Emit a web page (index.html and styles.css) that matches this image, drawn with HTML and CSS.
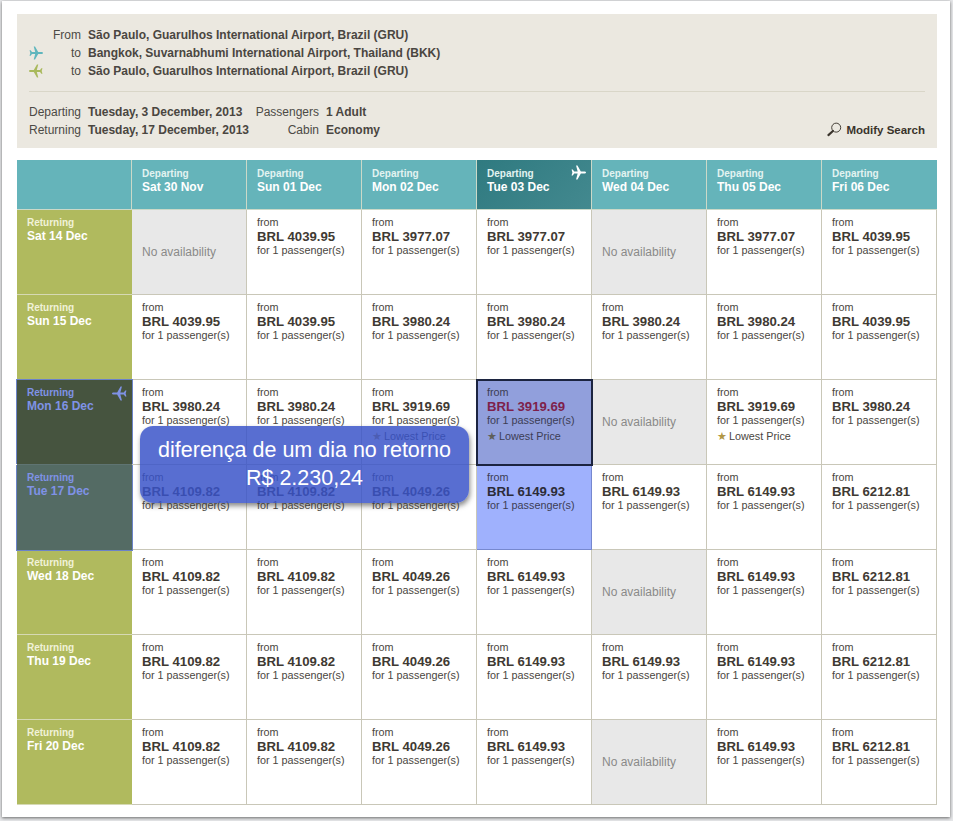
FILE: index.html
```html
<!DOCTYPE html>
<html lang="en">
<head>
<meta charset="utf-8">
<title>Flight search</title>
<link rel="stylesheet" href="styles.css">
</head>
<body>
<svg class="defs" width="0" height="0" aria-hidden="true"><defs>
<symbol id="plane" viewBox="0 0 16 16"><path d="M16 8c0-.8-.9-1.100-1.700-1.100H10.500L6.900.6H5.400L7.100 6.900H3.400L1.900 4.900H.6L1.500 8 .6 11.100H1.900L3.400 9.100H7.100L5.400 15.400H6.900L10.500 9.100H14.300C15.100 9.100 16 8.800 16 8Z"/></symbol>
</defs></svg>
<main class="window">
  <section class="summary">
    <div class="routes">
      <div class="label">From</div><div class="value">São Paulo, Guarulhos International Airport, Brazil (GRU)</div>
      <div class="label"><svg class="route-icon out"><use href="#plane"/></svg>to</div><div class="value">Bangkok, Suvarnabhumi International Airport, Thailand (BKK)</div>
      <div class="label"><svg class="route-icon back"><use href="#plane"/></svg>to</div><div class="value">São Paulo, Guarulhos International Airport, Brazil (GRU)</div>
    </div>
    <div class="details">
      <div class="label">Departing</div><div class="value">Tuesday, 3 December, 2013</div><div class="label">Passengers</div><div class="value">1 Adult</div><div></div>
      <div class="label">Returning</div><div class="value">Tuesday, 17 December, 2013</div><div class="label">Cabin</div><div class="value">Economy</div>
      <a class="modify"><svg class="lens" viewBox="0 0 16 16"><circle cx="9.800" cy="6" r="4.800" fill="none" stroke="#3a342c" stroke-width="1"/><path d="M6.300 9.500 1.500 14" stroke="#3a342c" stroke-width="2.200" stroke-linecap="round"/></svg>Modify Search</a>
    </div>
  </section>

  <section class="grid">
    <div class="corner"></div>
    <div class="dep"><small>Departing</small><b>Sat 30 Nov</b></div>
    <div class="dep"><small>Departing</small><b>Sun 01 Dec</b></div>
    <div class="dep"><small>Departing</small><b>Mon 02 Dec</b></div>
    <div class="dep active"><small>Departing</small><b>Tue 03 Dec</b><svg class="head-icon"><use href="#plane"/></svg></div>
    <div class="dep"><small>Departing</small><b>Wed 04 Dec</b></div>
    <div class="dep"><small>Departing</small><b>Thu 05 Dec</b></div>
    <div class="dep last"><small>Departing</small><b>Fri 06 Dec</b></div>

    <div class="ret"><small>Returning</small><b>Sat 14 Dec</b></div>
    <div class="cell none">No availability</div>
    <div class="cell">from<b>BRL 4039.95</b>for 1 passenger(s)</div>
    <div class="cell">from<b>BRL 3977.07</b>for 1 passenger(s)</div>
    <div class="cell">from<b>BRL 3977.07</b>for 1 passenger(s)</div>
    <div class="cell none">No availability</div>
    <div class="cell">from<b>BRL 3977.07</b>for 1 passenger(s)</div>
    <div class="cell">from<b>BRL 4039.95</b>for 1 passenger(s)</div>

    <div class="ret"><small>Returning</small><b>Sun 15 Dec</b></div>
    <div class="cell">from<b>BRL 4039.95</b>for 1 passenger(s)</div>
    <div class="cell">from<b>BRL 4039.95</b>for 1 passenger(s)</div>
    <div class="cell">from<b>BRL 3980.24</b>for 1 passenger(s)</div>
    <div class="cell">from<b>BRL 3980.24</b>for 1 passenger(s)</div>
    <div class="cell">from<b>BRL 3980.24</b>for 1 passenger(s)</div>
    <div class="cell">from<b>BRL 3980.24</b>for 1 passenger(s)</div>
    <div class="cell">from<b>BRL 4039.95</b>for 1 passenger(s)</div>

    <div class="ret dark"><small>Returning</small><b>Mon 16 Dec</b><svg class="head-icon flip"><use href="#plane"/></svg></div>
    <div class="cell">from<b>BRL 3980.24</b>for 1 passenger(s)</div>
    <div class="cell">from<b>BRL 3980.24</b>for 1 passenger(s)</div>
    <div class="cell">from<b>BRL 3919.69</b>for 1 passenger(s)<span class="low"><i>★</i>Lowest Price</span></div>
    <div class="cell picked">from<b>BRL 3919.69</b>for 1 passenger(s)<span class="low"><i>★</i>Lowest Price</span></div>
    <div class="cell none">No availability</div>
    <div class="cell">from<b>BRL 3919.69</b>for 1 passenger(s)<span class="low"><i>★</i>Lowest Price</span></div>
    <div class="cell">from<b>BRL 3980.24</b>for 1 passenger(s)</div>

    <div class="ret slate"><small>Returning</small><b>Tue 17 Dec</b></div>
    <div class="cell">from<b>BRL 4109.82</b>for 1 passenger(s)</div>
    <div class="cell">from<b>BRL 4109.82</b>for 1 passenger(s)</div>
    <div class="cell">from<b>BRL 4049.26</b>for 1 passenger(s)</div>
    <div class="cell blue">from<b>BRL 6149.93</b>for 1 passenger(s)</div>
    <div class="cell">from<b>BRL 6149.93</b>for 1 passenger(s)</div>
    <div class="cell">from<b>BRL 6149.93</b>for 1 passenger(s)</div>
    <div class="cell">from<b>BRL 6212.81</b>for 1 passenger(s)</div>

    <div class="ret"><small>Returning</small><b>Wed 18 Dec</b></div>
    <div class="cell">from<b>BRL 4109.82</b>for 1 passenger(s)</div>
    <div class="cell">from<b>BRL 4109.82</b>for 1 passenger(s)</div>
    <div class="cell">from<b>BRL 4049.26</b>for 1 passenger(s)</div>
    <div class="cell">from<b>BRL 6149.93</b>for 1 passenger(s)</div>
    <div class="cell none">No availability</div>
    <div class="cell">from<b>BRL 6149.93</b>for 1 passenger(s)</div>
    <div class="cell">from<b>BRL 6212.81</b>for 1 passenger(s)</div>

    <div class="ret"><small>Returning</small><b>Thu 19 Dec</b></div>
    <div class="cell">from<b>BRL 4109.82</b>for 1 passenger(s)</div>
    <div class="cell">from<b>BRL 4109.82</b>for 1 passenger(s)</div>
    <div class="cell">from<b>BRL 4049.26</b>for 1 passenger(s)</div>
    <div class="cell">from<b>BRL 6149.93</b>for 1 passenger(s)</div>
    <div class="cell">from<b>BRL 6149.93</b>for 1 passenger(s)</div>
    <div class="cell">from<b>BRL 6149.93</b>for 1 passenger(s)</div>
    <div class="cell">from<b>BRL 6212.81</b>for 1 passenger(s)</div>

    <div class="ret"><small>Returning</small><b>Fri 20 Dec</b></div>
    <div class="cell">from<b>BRL 4109.82</b>for 1 passenger(s)</div>
    <div class="cell">from<b>BRL 4109.82</b>for 1 passenger(s)</div>
    <div class="cell">from<b>BRL 4049.26</b>for 1 passenger(s)</div>
    <div class="cell">from<b>BRL 6149.93</b>for 1 passenger(s)</div>
    <div class="cell none">No availability</div>
    <div class="cell">from<b>BRL 6149.93</b>for 1 passenger(s)</div>
    <div class="cell">from<b>BRL 6212.81</b>for 1 passenger(s)</div>

    <div class="note">diferença de um dia no retorno<br>R$ 2.230,24</div>
  </section>
</main>
</body>
</html>
```
FILE: styles.css
```css
* { box-sizing: border-box; }
html, body { margin: 0; height: 100%; }
body {
  background: #e6e7e9;
  font-family: "Liberation Sans", Arial, sans-serif;
  color: #3f3a33;
  overflow: hidden;
}
.defs { position: absolute; }
.window {
  width: 948px;
  height: 816px;
  margin: 1px 0 0 2px;
  padding: 13px 13px 0 15px;
  background: #fff;
  box-shadow: 0 1px 3px rgba(0,0,0,.55);
}
.summary {
  width: 920px;
  height: 134px;
  padding: 12px 12px 0;
  background: #ebe8e0;
  font-size: 12px;
  line-height: 18px;
}
.label { color: #4c4a45; text-align: right; position: relative; }
.value { font-weight: bold; color: #4a4641; white-space: nowrap; }
.routes {
  display: grid;
  grid-template-columns: 52px 1fr;
  grid-auto-rows: 18px;
  column-gap: 7px;
  height: 66px;
  border-bottom: 1px solid #d9d6c8;
}
.route-icon { position: absolute; left: 0; top: 2px; width: 14px; height: 14px; }
.out { fill: #5fb6bd; }
.back { fill: #a9b95c; transform: scaleX(-1); }
.details {
  display: grid;
  grid-template-columns: 52px 160px 64px 1fr auto;
  grid-auto-rows: 18px;
  column-gap: 7px;
  padding-top: 11px;
}
.modify {
  display: flex;
  align-items: center;
  gap: 4px;
  font-size: 11.500px;
  font-weight: bold;
  color: #3a342c;
}
.lens { width: 15px; height: 15px; margin-top: -2px; }
.grid {
  position: relative;
  margin-top: 12px;
  width: 920px;
  display: grid;
  grid-template-columns: 115px repeat(7, 115px);
  grid-template-rows: 50px repeat(7, 85px);
}
.corner, .dep { background: #65b4ba; border-right: 1px solid #cbd9c8; border-bottom: 1px solid #cbd9c8; }
.dep, .ret {
  position: relative;
  padding: 7px 10px;
  color: #fff;
  font-weight: bold;
}
small, .dep b, .ret b { display: block; }
small { font-size: 10px; line-height: 13px; font-weight: bold; }
.dep b, .ret b { font-size: 12px; line-height: 14px; }
.dep.last { border-right: 0; }
.dep small { color: #e3f3f1; }
.active { background: linear-gradient(135deg, #2f7a80, #43898f); }
.head-icon { position: absolute; top: 5px; right: 5px; width: 15px; height: 15px; fill: #fff; }
.ret {
  background: #b0ba5e;
  border-bottom: 1px solid #d6d9b4;
  color: #fff;
  padding-top: 6px;
}
.ret small { color: #f0f2d8; }
.dark, .slate { color: #7f92e6; z-index: 1; border-bottom: 0; }
.dark small, .slate small { color: #7f92e6; }
.dark { background: #46543f; box-shadow: -1px -1px 0 #6b83c8, 1px -1px 0 #6b83c8; border-bottom: 1px solid #5f7472; }
.slate { background: #546b64; box-shadow: -1px 1px 0 #6b83c8, 1px 1px 0 #6b83c8, -1px 0 0 #6b83c8, 1px 0 0 #6b83c8; }
.flip { fill: #7f92e6; transform: scaleX(-1); top: 6px; right: 5px; }
.cell {
  padding: 5px 10px 0;
  background: #fff;
  border-right: 1px solid #c9c7b8;
  border-bottom: 1px solid #c9c7b8;
  font-size: 10.800px;
  line-height: 14px;
  color: #4a4641;
}
.cell b {
  display: block;
  padding-top: 1px;
  margin-bottom: -1px;
  font-size: 13.200px;
  line-height: 14px;
  color: #3f3a33;
}
.none {
  display: flex;
  align-items: center;
  padding-top: 0;
  background: #e8e8e8;
  color: #8a8a88;
  font-size: 12px;
}
.low { display: block; margin-top: 1px; line-height: 16px; }
.low i { color: #b19745; font-style: normal; margin-right: 2px; }
.picked { background: #919fdc; outline: 2px solid #1c2440; outline-offset: -1px; z-index: 1; color: #3c3d55; }
.picked b { color: #7e1f4b; }
.picked i { color: #5f5f5a; }
.blue { background: #9fb1fd; border-color: #7688cf; color: #3c3d55; }
.blue b { color: #2c2c38; }
.note {
  position: absolute;
  left: 123px;
  top: 266px;
  z-index: 2;
  width: 329px;
  height: 77px;
  padding: 10px 0 0;
  border-radius: 13px;
  background: rgba(56, 82, 200, .84);
  box-shadow: 1px 3px 5px rgba(60, 60, 60, .6);
  color: #fff;
  text-align: center;
  font-size: 21.500px;
  line-height: 28px;
}
```
